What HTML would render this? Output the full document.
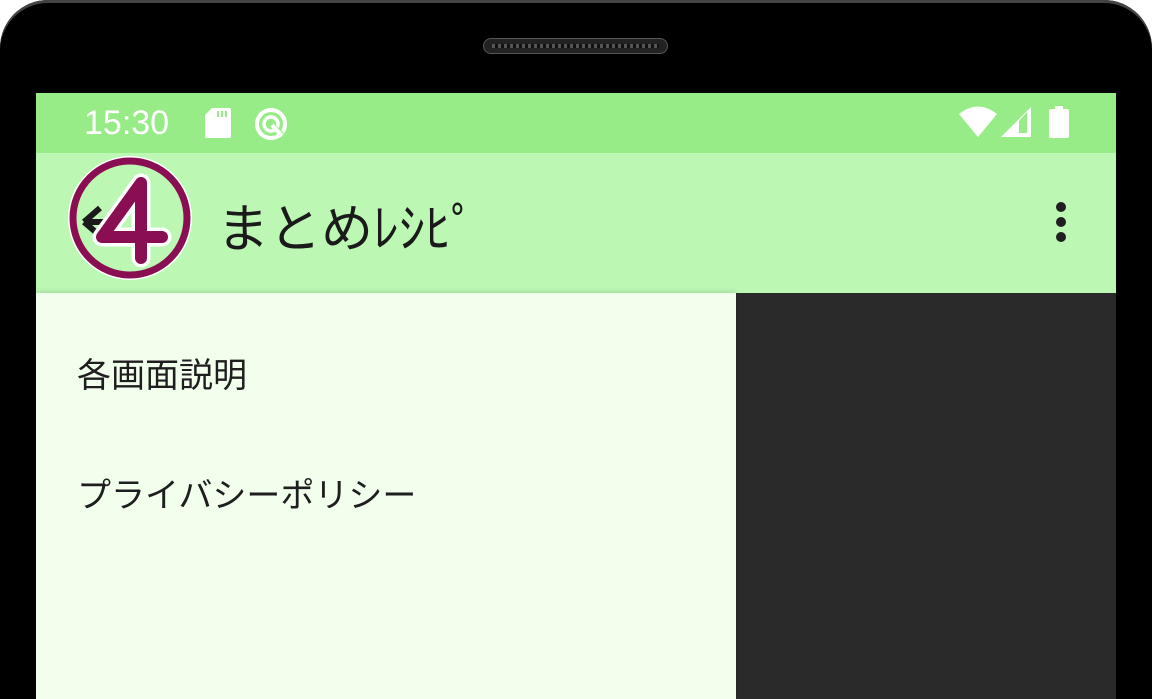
<!DOCTYPE html>
<html><head><meta charset="utf-8"><style>
html,body{margin:0;padding:0;width:1152px;height:699px;overflow:hidden;background:#fff;}
.phone{position:absolute;left:0;top:0;width:1152px;height:699px;background:#000;border-radius:48px 48px 0 0;box-shadow:inset 0 3px 0 #444;}
.spk{position:absolute;left:483px;top:38px;width:185px;height:16px;border-radius:8px;background:#222;border:1px solid #555;box-sizing:border-box;}
.spk:after{content:"";position:absolute;left:8px;right:8px;top:5px;height:4px;background:repeating-linear-gradient(90deg,#555 0 3px,#111 3px 6px);}
.screen{position:absolute;left:36px;top:93px;width:1080px;height:606px;background:#2a2a2a;overflow:hidden;}
.status{position:absolute;left:0;top:0;width:1080px;height:60px;background:#98ec88;}
.time{position:absolute;left:48px;top:11px;font:34px "Liberation Sans",sans-serif;color:#fff;}
.tool{position:absolute;left:0;top:60px;width:1080px;height:140px;background:#bcf7b4;}
.title{position:absolute;left:181px;top:34px;font:52px "Liberation Sans","Noto Sans CJK JP",sans-serif;color:#1a1a1a;}
.drawer{position:absolute;left:0;top:200px;width:700px;height:406px;background:#f1ffec;box-shadow:0 -2px 4px rgba(0,0,0,.1);}
.item{position:absolute;left:41px;font:34px "Liberation Sans","Noto Sans CJK JP",sans-serif;color:#1e1e1e;}
</style></head><body>
<div class="phone"><div class="spk"></div></div>
<div class="screen">
 <div class="status">
  <div class="time">15:30</div>
  <svg style="position:absolute;left:168px;top:14px" width="28" height="32" viewBox="0 0 28 32"><path d="M8 1H25a2 2 0 0 1 2 2V29a2 2 0 0 1-2 2H3a2 2 0 0 1-2-2V8Z" fill="#fff"/><rect x="13" y="4" width="2" height="6" fill="#98ec88"/><rect x="17" y="4" width="2" height="6" fill="#98ec88"/><rect x="21" y="4" width="2" height="6" fill="#98ec88"/></svg>
  <svg style="position:absolute;left:218px;top:14px" width="36" height="36" viewBox="0 0 36 36"><circle cx="17" cy="17" r="14" fill="none" stroke="#fff" stroke-width="4"/><circle cx="17" cy="17" r="7" fill="none" stroke="#fff" stroke-width="3.5"/><path d="M20 20L30 30" stroke="#98ec88" stroke-width="5"/><path d="M18 18L28 29" stroke="#fff" stroke-width="4"/></svg>
  <svg style="position:absolute;left:922px;top:12px" width="40" height="32" viewBox="0 0 40 32"><path d="M1 9Q20-6 39 9L20 32Z" fill="#fff"/></svg>
  <svg style="position:absolute;left:964px;top:13px" width="32" height="32" viewBox="0 0 32 32"><path d="M31 1V31H1Z" fill="#fff"/><path d="M19 15V27H27V6Z" fill="#98ec88"/></svg>
  <svg style="position:absolute;left:1012px;top:13px" width="22" height="32" viewBox="0 0 22 32"><rect x="7" y="0" width="8" height="4" fill="#fff"/><rect x="1" y="3" width="20" height="29" rx="2" fill="#fff"/></svg>
 </div>
 <div class="tool">
  <svg style="position:absolute;left:32px;top:2px" width="126" height="126" viewBox="0 0 126 126">
   <circle cx="62" cy="63" r="62" fill="#fff"/><circle cx="62" cy="63" r="57" fill="#bcf7b4" stroke="#8a0f52" stroke-width="7"/>
   <path d="M16 67H50M16 67l16-14M16 67l14 12" stroke="#1a1a1a" stroke-width="6" fill="none"/>
   <path d="M73 28V103M73 28L34 82H94" stroke="#fff" stroke-width="19" stroke-linecap="round" stroke-linejoin="round" fill="none"/>
   <path d="M73 28V103M73 28L34 82H94" stroke="#8a0f52" stroke-width="12" stroke-linecap="round" stroke-linejoin="round" fill="none"/>
  </svg>
  <div class="title">まとめﾚｼﾋﾟ</div>
  <svg style="position:absolute;left:1016px;top:48px" width="18" height="44" viewBox="0 0 18 44"><circle cx="9" cy="6" r="5" fill="#1f1f1f"/><circle cx="9" cy="21" r="5" fill="#1f1f1f"/><circle cx="9" cy="36" r="5" fill="#1f1f1f"/></svg>
 </div>
 <div class="drawer">
  <div class="item" style="top:55px">各画面説明</div>
  <div class="item" style="top:175px">プライバシーポリシー</div>
 </div>
</div>
</body></html>
